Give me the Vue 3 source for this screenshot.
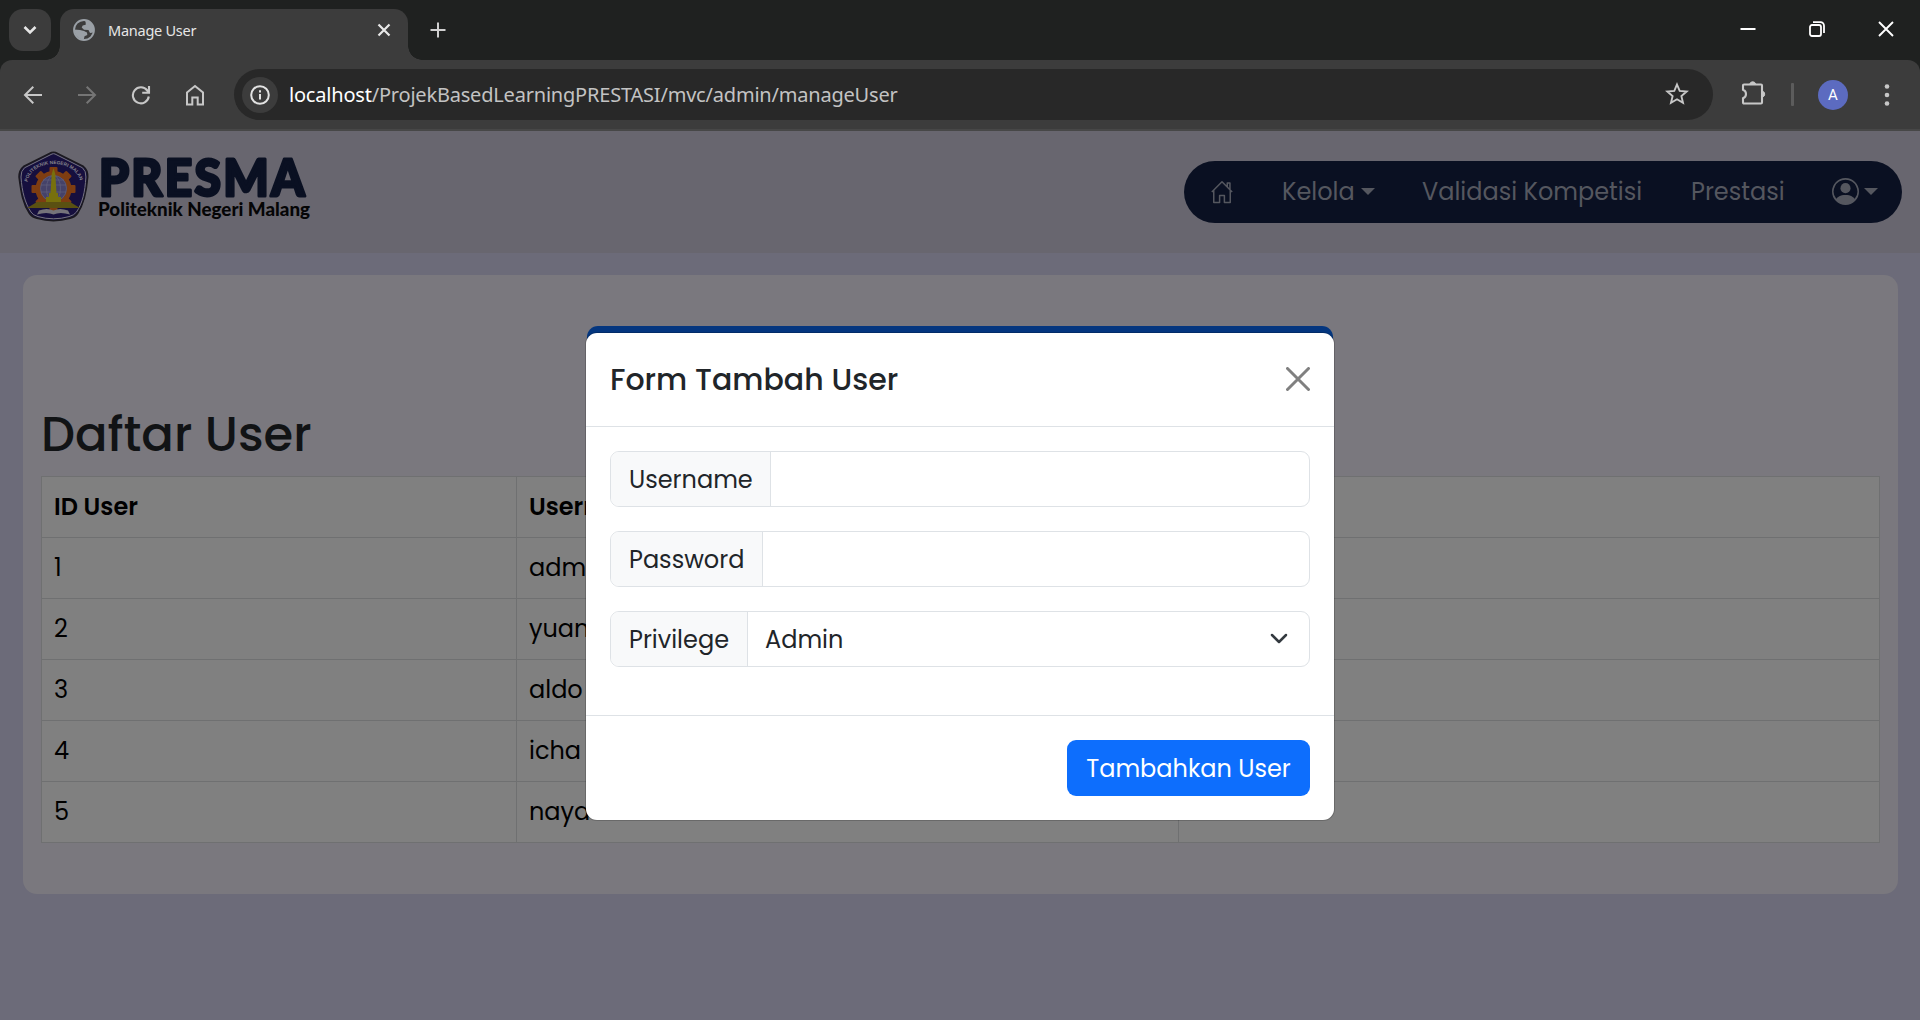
<script setup>
const users = [
  { id: 1, name: 'admin' },
  { id: 2, name: 'yuan' },
  { id: 3, name: 'aldo' },
  { id: 4, name: 'icha' },
  { id: 5, name: 'naya' },
]
const teeth = [0, 45, 90, 135, 180, 225, 270, 315]
</script>

<template>
  <div class="window">
    <header class="tabs">
      <div class="tab-search">
        <svg width="14" height="10" viewBox="0 0 14 10"><path d="M1.500 2l5.500 5.500L12.500 2" fill="none" stroke="#e6e6e6" stroke-width="2.600" /></svg>
      </div>
      <div class="tab">
        <svg class="globe" width="22" height="22" viewBox="0 0 22 22">
          <circle cx="11" cy="11" r="10" fill="none" stroke="#9aa0a6" stroke-width="1.800" />
          <path d="M12 1a10 10 0 0 1 8.500 12.500l-3.500.5-1.500-3-4.500-.3-2.300-2.200 1-2 3-.8 0-2zM1.300 10.500l5.700.5 4 1 3 1.500.3 2.500-2.800 1.200-.7 3.300A10 10 0 0 1 1.300 10.500z" fill="#9aa0a6" />
        </svg>
        <span class="tab-title">Manage User</span>
        <svg class="tab-close" width="14" height="14" viewBox="0 0 14 14"><path d="M1.500 1.500l11 11m0-11l-11 11" stroke="#e8e8e8" stroke-width="2.200" /></svg>
      </div>
      <svg class="plus" width="16" height="16" viewBox="0 0 16 16"><path d="M8 .5v15M.5 8h15" stroke="#d0d0d0" stroke-width="2" /></svg>
      <div class="controls">
        <svg width="16" height="16" viewBox="0 0 16 16"><path d="M.5 8h15" stroke="#fff" stroke-width="2" /></svg>
        <svg width="16" height="16" viewBox="0 0 16 16" fill="none" stroke="#fff" stroke-width="1.800"><rect x="1" y="4" width="11" height="11" rx="2" /><path d="M4 1.200h7.500a3.500 3.500 0 0 1 3.500 3.500V12" /></svg>
        <svg width="16" height="16" viewBox="0 0 16 16"><path d="M1 1l14 14m0-14L1 15" stroke="#fff" stroke-width="1.900" /></svg>
      </div>
    </header>

    <div class="toolbar">
      <div class="nav-icons">
        <svg width="20" height="20" viewBox="0 0 20 20" fill="none" stroke="#c7c7c7" stroke-width="2"><path d="M19 10H2.500M10.300 1.800L2 10l8.300 8.200" /></svg>
        <svg width="20" height="20" viewBox="0 0 20 20" fill="none" stroke="#757575" stroke-width="2"><path d="M1 10h16.500M9.700 1.800L18 10l-8.300 8.200" /></svg>
        <svg width="20" height="20" viewBox="0 0 20 20" fill="none" stroke="#c7c7c7" stroke-width="2.100"><path d="M17.800 11.500A8 8 0 1 1 16.300 5.500l1.200 1.600M18 1v6.800h-6.800" /></svg>
        <svg width="20" height="22" viewBox="0 0 20 22" fill="none" stroke="#c7c7c7" stroke-width="2"><path d="M2 8.500L10 2l8 6.500V20.500h-5.300v-7H7.300v7H2z" /></svg>
      </div>
      <div class="omnibox">
        <span class="info">
          <svg width="20" height="20" viewBox="0 0 20 20"><circle cx="10" cy="10" r="8.800" fill="none" stroke="#e3e3e3" stroke-width="2" /><path d="M10 9v5.500M10 5.300v2.100" stroke="#e3e3e3" stroke-width="2" /></svg>
        </span>
        <span class="url"><b>localhost</b>/ProjekBasedLearningPRESTASI/mvc/admin/manageUser</span>
        <svg class="star" width="24" height="24" viewBox="0 0 24 24"><path d="M12 2.500l2.700 6.400 7 .6-5.300 4.600 1.600 6.800-6-3.600-6 3.600 1.600-6.800-5.300-4.600 7-.6z" fill="none" stroke="#c7c7c7" stroke-width="1.900" /></svg>
      </div>
      <svg class="puzzle" width="25" height="26" viewBox="0 0 25 26"><path d="M3 4.500h17q1 0 1 1v17q0 1-1 1H3q-1 0-1-1v-4.300c4-1.500 4-7 0-8.500V5.500q0-1 1-1z" fill="none" stroke="#c7c7c7" stroke-width="2.100" /><path d="M8.800 4a3 3 0 0 1 5.800 0zM21.500 11.200a3 3 0 0 1 0 5.800z" fill="#c7c7c7" stroke="#c7c7c7" /></svg>
      <span class="sep"></span>
      <span class="avatar">A</span>
      <svg class="dots" width="6" height="24" viewBox="0 0 6 24" fill="#c7c7c7"><circle cx="3" cy="3.500" r="2.300" /><circle cx="3" cy="12" r="2.300" /><circle cx="3" cy="20.500" r="2.300" /></svg>
    </div>

    <main class="page">
      <div class="navbar">
        <svg class="brand" width="300" height="80" viewBox="0 0 300 80">
          <path d="M34.500 1.500Q36.500.8 38.500 1.500L66.500 15.500Q71 19 70.700 26C69.500 42 67 53 60.500 62.500Q58 66 53 67.300Q36.500 72 20 67.300Q15 66 12.500 62.500C6 53 4 42 2 26Q2 19 6.500 15.500z" fill="#17123f" stroke="#1b191f" stroke-width="1.500" />
          <path d="M35 3Q36.500 2.400 38 3L65.500 16.800Q69.200 20 68.900 26C68 41 65.500 52 59.500 61Q57 64.300 52 65.600Q36.500 70 21 65.600Q16 64.300 14 61C8 52 5 41 4 26Q3.800 20 7.500 16.800z" fill="#160f3e" stroke="#77757e" stroke-width="1" />
          <g fill="#7e3d11" transform="translate(36.500 38)">
            <rect v-for="a in teeth" :key="a" x="-4" y="-22" width="8" height="9" rx="1" :transform="`rotate(${a})`" />
            <circle r="18" />
          </g>
          <circle cx="36.500" cy="37.500" r="13.300" fill="#454269" />
          <g fill="none" stroke="#66647f" stroke-width=".6"><circle cx="36.500" cy="37.500" r="13" /><ellipse cx="36.500" cy="37.500" rx="7" ry="13" /><path d="M24 34h25M24 41h25M26 29h21" /></g>
          <path d="M10 57l10-6h33l10 6z" fill="#5a5012" />
          <path d="M36.500 17l1.800 6 1.200 19h1.500v4h3v5H29v-5h3v-4h1.500l1.200-19z" fill="#77700d" />
          <path d="M22 59.500q8-3 14.500 0 6.500-3 14.500 0l2 4q-10-3-16.500 0-6.500-3-16.500 0z" fill="#75737a" />
          <path id="seal-arc" d="M10.500 31C15 7 58 7 63.500 31" fill="none" />
          <text class="seal"><textPath href="#seal-arc">POLITEKNIK NEGERI MALANG</textPath></text>
          <text class="presma" x="82" y="45" textLength="208" lengthAdjust="spacingAndGlyphs">PRESMA</text>
          <text class="poltek" x="81" y="65" textLength="212" lengthAdjust="spacingAndGlyphs">Politeknik Negeri Malang</text>
        </svg>
        <nav class="pill">
          <svg class="home" width="24" height="24" viewBox="0 0 16 16" fill="none" stroke="currentColor" stroke-linejoin="round"><path d="M1.200 8L8 1.200 14.800 8M2.500 6.800V15h3.900v-4.700h3.200V15h3.900V6.800M11.500 4.500V2h1.800v4.200" /></svg>
          <span class="kelola">Kelola</span><i class="caret"></i>
          <span class="validasi">Validasi Kompetisi</span>
          <span class="prestasi">Prestasi</span>
          <svg class="person" width="27" height="27" viewBox="0 0 16 16" fill="currentColor"><path d="M11 6a3 3 0 1 1-6 0 3 3 0 0 1 6 0" /><path fill-rule="evenodd" d="M0 8a8 8 0 1 1 16 0A8 8 0 0 1 0 8m8-7a7 7 0 0 0-5.468 11.370C3.242 11.226 4.805 10 8 10s4.757 1.225 5.468 2.370A7 7 0 0 0 8 1" /></svg>
          <i class="caret"></i>
        </nav>
      </div>

      <section class="card">
        <h2>Daftar User</h2>
        <table>
          <thead><tr><th class="c1">ID User</th><th class="c2">Username</th><th></th></tr></thead>
          <tbody>
            <tr v-for="u in users" :key="u.id"><td>{{ u.id }}</td><td>{{ u.name }}</td><td></td></tr>
          </tbody>
        </table>
      </section>

      <div class="modal">
        <div class="modal-content">
          <div class="modal-header">
            <span class="modal-title">Form Tambah User</span>
            <svg width="24" height="24" viewBox="0 0 24 24"><path d="M1.500 1.500l21 21m0-21l-21 21" stroke="#808080" stroke-width="3" stroke-linecap="round" /></svg>
          </div>
          <div class="modal-body">
            <div class="group"><span class="label l1">Username</span></div>
            <div class="group"><span class="label l2">Password</span></div>
            <div class="group">
              <span class="label l3">Privilege</span>
              <span class="value">Admin</span>
              <svg width="18" height="12" viewBox="0 0 18 12"><path d="M2 2l7 7 7-7" fill="none" stroke="#343a40" stroke-width="2.500" stroke-linecap="round" stroke-linejoin="round" /></svg>
            </div>
          </div>
          <div class="modal-footer"><span class="btn">Tambahkan User</span></div>
        </div>
      </div>
    </main>
  </div>
</template>

<style>
body { margin: 0; overflow: hidden; }
</style>

<style scoped>
* { box-sizing: border-box; }
svg { display: block; flex: none; }
.window { width: 1920px; height: 1020px; display: flex; flex-direction: column; overflow: hidden; background: #1f2120; font-family: Poppins, Inter, sans-serif; }
.tabs { height: 60px; flex: none; display: flex; padding-top: 9px; font-family: "Segoe UI", "Noto Sans", sans-serif; }
.tab-search { width: 42px; height: 42px; margin-left: 9px; border-radius: 14px; background: #3c3c3c; display: flex; align-items: center; justify-content: center; }
.tab { position: relative; width: 348px; height: 51px; margin-left: 9px; padding: 0 17px 9px 13px; border-radius: 14px 14px 0 0; background: #3c3c3c; display: flex; align-items: center; }
.tab::before, .tab::after { content: ""; position: absolute; bottom: 0; width: 14px; height: 14px; }
.tab::before { left: -14px; background: radial-gradient(circle at 0 0, transparent 13.500px, #3c3c3c 14px); }
.tab::after { right: -14px; background: radial-gradient(circle at 100% 0, transparent 13.500px, #3c3c3c 14px); }
.tab-title { margin-left: 13px; flex: 1; font-size: 14.500px; color: #e6e6e6; letter-spacing: -.25px; }
.plus { margin: 13px 0 0 22px; }
.controls { display: flex; gap: 53px; margin: 12px 26px 0 auto; }
.toolbar { height: 71px; flex: none; display: flex; align-items: center; background: #3c3c3c; border-bottom: 2px solid #474747; border-radius: 12px 12px 0 0; }
.nav-icons { display: flex; align-items: center; gap: 34px; margin-left: 23px; width: 211px; }
.omnibox { width: 1479px; height: 51px; border-radius: 26px; background: #282828; display: flex; align-items: center; padding: 0 24px 0 8px; font-family: "Segoe UI", "Noto Sans", sans-serif; }
.info { width: 36px; height: 36px; border-radius: 50%; background: #3c3c3c; display: flex; align-items: center; justify-content: center; }
.url { margin: 0 0 1px 11px; flex: 1; font-size: 20px; letter-spacing: -.2px; color: #c3c3c3; white-space: nowrap; }
.url b { font-weight: 400; color: #fff; }
.star { margin-bottom: 2px; }
.puzzle { margin-left: 28px; margin-bottom: 3px; }
.sep { width: 3px; height: 23px; margin-left: 25px; background: #5c5c5c; border-radius: 1px; }
.avatar { width: 30px; height: 30px; margin-left: 24px; border-radius: 50%; background: #5c6bc0; color: #fff; font: 15px/30px Roboto, sans-serif; text-align: center; }
.dots { margin-left: 36px; }
.page { flex: 1; position: relative; background: #6c6b79; display: flex; flex-direction: column; }
.navbar { height: 122px; background: #68666f; display: flex; justify-content: space-between; padding: 0 18px 0 17px; }
.brand { margin-top: 20px; overflow: visible; }
.seal { font: 700 4.800px "Liberation Sans", sans-serif; fill: #85838d; }
.presma { font: 900 52px Lato, sans-serif; letter-spacing: 2.500px; fill: #0a1022; stroke: #0a1022; stroke-width: 3px; stroke-linejoin: round; }
.poltek { font: 900 18px Lato, sans-serif; fill: #050506; }
.pill { width: 718px; height: 62px; margin-top: 30px; border-radius: 31px; background: #0a1022; color: #55575f; display: flex; align-items: center; font-size: 24px; white-space: nowrap; padding: 0 0 1px 26px; }
.kelola { width: 79px; margin-left: 48px; }
.caret { border: 7px solid transparent; border-top-color: #55575f; border-bottom: 0; }
.validasi { width: 221px; margin-left: 47px; }
.prestasi { width: 98px; margin-left: 48px; }
.person { margin-left: 43px; margin-right: 5px; }
.card { width: 1875px; height: 619px; margin: 22px 0 0 23px; padding: 131px 18px 0; border-radius: 14px; background: #7a787e; }
h2 { margin: 0 0 12px; font-size: 48px; line-height: 58px; font-weight: 500; color: #111315; }
table { width: 1839px; border-collapse: collapse; table-layout: fixed; background: #808080; font-size: 24px; color: #000; }
th, td { height: 61px; padding: 0 12px; border: 1px solid #6f7071; text-align: left; line-height: 36px; }
th { font-weight: 600; }
.c1 { width: 475px; }
.c2 { width: 662px; }
.modal { position: absolute; left: 586px; top: 202px; width: 748px; z-index: 1; }
.modal::before { content: ""; position: absolute; left: 1px; right: 1px; top: -7px; height: 30px; border-radius: 11px; background: #04367f; }
.modal-content { position: relative; height: 487px; border-radius: 11px; background: #fff; box-shadow: 0 0 0 1px rgba(0, 0, 0, .175); color: #212529; display: flex; flex-direction: column; }
.modal-header { height: 94px; padding: 0 24px; border-bottom: 1px solid #dee2e6; display: flex; align-items: center; justify-content: space-between; }
.modal-header svg { margin-bottom: 2px; }
.modal-title { font-size: 30px; font-weight: 500; }
.modal-body { height: 288px; padding: 24px; display: flex; flex-direction: column; gap: 24px; }
.group { height: 56px; flex: none; border: 1px solid #dee2e6; border-radius: 9px; display: flex; align-items: center; font-size: 24px; overflow: hidden; padding-right: 21px; }
.label { height: 100%; line-height: 55px; padding-left: 18px; background: #f8f9fa; border-right: 1px solid #dee2e6; }
.l1 { width: 160px; }
.l2 { width: 152px; }
.l3 { width: 137px; }
.value { flex: 1; padding-left: 17px; line-height: 55px; }
.modal-footer { flex: 1; border-top: 1px solid #dee2e6; padding: 24px; display: flex; justify-content: flex-end; }
.btn { width: 243px; height: 56px; border-radius: 9px; background: #0d6efd; color: #fff; font-size: 24px; font-weight: 400; line-height: 57px; text-align: center; white-space: nowrap; }
</style>
